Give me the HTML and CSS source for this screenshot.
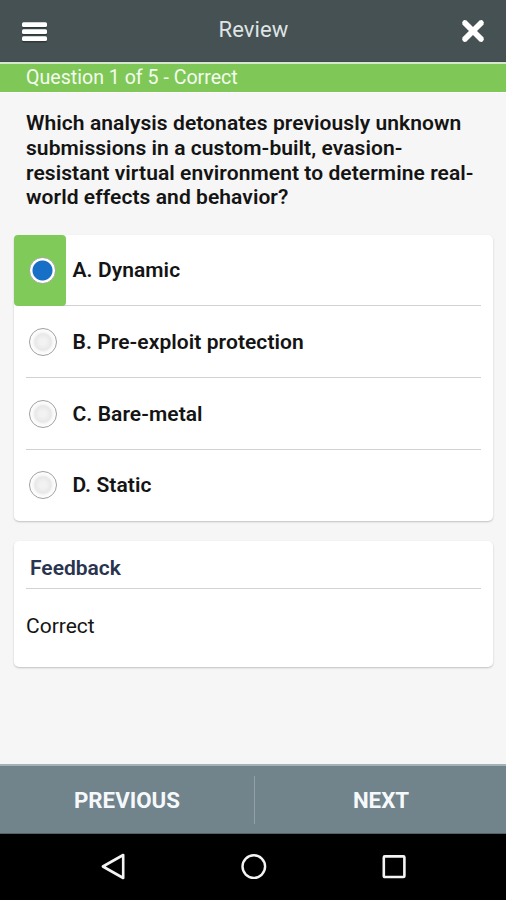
FILE: index.html
```html
<!DOCTYPE html>
<html lang="en">
<head>
<meta charset="utf-8">
<title>Review</title>
<link rel="stylesheet" href="styles.css">
</head>
<body>
<header class="topbar">
  <svg class="menu" width="28" height="24" viewBox="0 0 28 24"><g fill="#2f393c"><rect x="1" y="3.5" width="25" height="5" rx="1.5"/><rect x="1" y="10.5" width="25" height="5" rx="1.5"/><rect x="1" y="17.5" width="25" height="5" rx="1.5"/></g><g fill="#fff"><rect x="1" y="2.2" width="25" height="4.7" rx="1.5"/><rect x="1" y="9.3" width="25" height="4.7" rx="1.5"/><rect x="1" y="16.3" width="25" height="4.7" rx="1.5"/></g></svg>
  <h1>Review</h1>
  <svg class="close" width="28" height="28" viewBox="0 0 28 28"><path d="M5.2 5.2 22.8 22.8M22.8 5.2 5.2 22.8" stroke="#fff" stroke-width="5.6"/><path d="M5.7 5.7 22.3 22.3M22.3 5.7 5.7 22.3" stroke="#fff" stroke-width="5" stroke-linecap="round"/></svg>
</header>
<div class="status"><span>Question 1 of 5 - Correct</span></div>
<main>
  <p class="question">Which analysis detonates previously unknown<br>submissions in a custom-built, evasion-<br>resistant virtual environment to determine real-<br>world effects and behavior?</p>
  <section class="card answers">
    <div class="row"><div class="mark correct"><i class="radio on"></i></div><span>A. Dynamic</span></div>
    <div class="row"><div class="mark"><i class="radio"></i></div><span>B. Pre-exploit protection</span></div>
    <div class="row"><div class="mark"><i class="radio"></i></div><span>C. Bare-metal</span></div>
    <div class="row"><div class="mark"><i class="radio"></i></div><span>D. Static</span></div>
  </section>
  <section class="card feedback">
    <h2>Feedback</h2>
    <p>Correct</p>
  </section>
</main>
<footer class="actions"><div class="prev"><span>PREVIOUS</span></div><div class="next"><span>NEXT</span></div></footer>
<nav class="system">
  <svg width="28" height="30" viewBox="0 0 28 30"><path d="M23.2 3V26L2.9 14.5Z" fill="none" stroke="#f4f4f4" stroke-width="2.6" stroke-linejoin="round"/></svg>
  <svg width="28" height="30" viewBox="0 0 28 30"><circle cx="13.8" cy="14.6" r="11.3" fill="none" stroke="#f4f4f4" stroke-width="2.4"/></svg>
  <svg width="28" height="30" viewBox="0 0 28 30"><rect x="3.8" y="4.4" width="20.6" height="20.6" rx="1" fill="none" stroke="#f4f4f4" stroke-width="2.6"/></svg>
</nav>
</body>
</html>
```
FILE: styles.css
```css
* { box-sizing: border-box; margin: 0; padding: 0; }
body { width: 506px; height: 900px; display: flex; flex-direction: column; overflow: hidden; background: #f6f6f6; font-family: Roboto, "Liberation Sans", sans-serif; color: #141414; }
svg { display: block; }
.topbar { height: 62px; display: grid; grid-template-columns: 100px 1fr 100px; align-items: center; background: #465153; border-bottom: 1px solid #3f4a4c; }
.menu { margin-left: 21px; margin-top: 2px; }
.close { margin-left: 53px; margin-top: 1px; }
h1 { text-align: center; font-size: 22px; font-weight: 400; line-height: 26px; letter-spacing: .1px; color: #dfe4e4; padding-left: 1px; padding-bottom: 1px; }
.status { height: 30px; padding: 0 26px; background: #7fc857; border-top: 2px solid #d5e7cd; color: #f4fbef; font-size: 19.6px; line-height: 27px; }
main { flex: 1; padding: 18px 13px 0 14px; border-top: 1px solid #fff; }
.question { margin-left: 12px; height: 124px; white-space: nowrap; font-size: 21px; font-weight: 600; line-height: 24.8px; letter-spacing: .07px; }
.card { background: #fff; border-radius: 5px; box-shadow: 0 1px 2px #00000038; }
.answers { height: 286px; display: grid; grid-template-rows: 71px 72px 72px 71px; }
.row { display: flex; align-items: center; font-size: 21px; font-weight: 600; letter-spacing: .07px; background: linear-gradient(#d2d2d2, #d2d2d2) 12px 100% / 455px 1px no-repeat; }
.row span { padding-bottom: 1px; }
.row:last-child { background: none; }
.mark { width: 52px; margin-right: 6.5px; align-self: stretch; display: flex; align-items: center; justify-content: center; padding-left: 5px; }
.correct { background: #80ca59; border-radius: 4px; }
.radio { width: 28px; height: 28px; border: 1.5px solid #a0a0a0; border-radius: 50%; background: radial-gradient(circle, #f2f2f2 0 3px, #e8e8e8 8px, #f8f8f8 10px, #fff 13px); }
.row:not(:first-child) .radio { margin-bottom: 1px; }
.radio.on { width: 27px; height: 27px; border-color: #a4ada0; background: radial-gradient(circle, #1870c6 0 9.5px, #fff 10.5px); }
.feedback { margin-top: 20px; height: 126px; padding: 0 12px; }
h2 { height: 48px; border-bottom: 1px solid #d2d2d2; padding-left: 4px; font-size: 21px; font-weight: 600; line-height: 55px; color: #29344e; }
.feedback p { font-size: 21px; line-height: 25px; margin-top: 25px; }
.actions { height: 70px; display: grid; grid-template-columns: 254px 252px; align-items: center; text-align: center; background: #71838b; border-top: 2px solid #a4b1b5; border-bottom: 1px solid #526269; color: #f6f9fb; font-size: 22.3px; font-weight: 700; }
.prev { height: 48px; line-height: 49px; }
.next { height: 48px; line-height: 49px; border-left: 1px solid #93a2a8; padding-left: 1px; }
.system { height: 66px; display: flex; justify-content: center; align-items: center; gap: 112px; padding-left: 1px; background: #000; }
```
